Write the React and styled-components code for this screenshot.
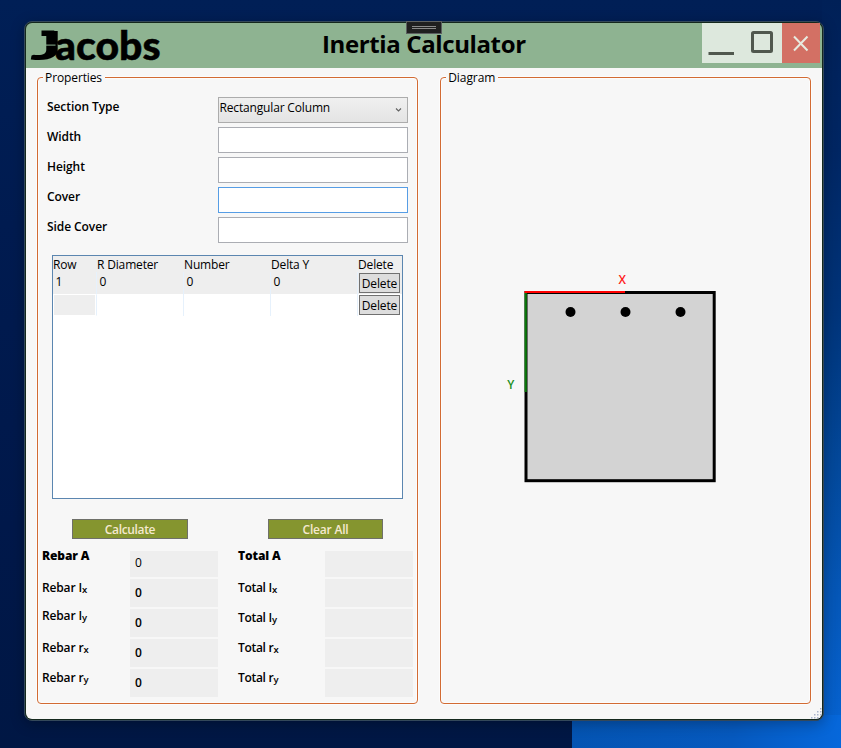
import React from 'react';
import styled, { createGlobalStyle } from 'styled-components';

const GlobalStyle = createGlobalStyle`
  * { box-sizing: border-box; }
  body { margin: 0; overflow: hidden; }
`;

const Desktop = styled.div`
  width: 841px;
  height: 748px;
  padding: 21px 0 0 24px;
  font: 400 12px/16px "Open Sans", "Noto Sans", sans-serif;
  color: #000;
  background:
    linear-gradient(100deg, #0454b2 0%, #0659be 60%, #0668dc 100%) 572px 715px / 269px 33px no-repeat,
    linear-gradient(180deg, #002057 0%, #002663 20%, #00347a 42%, #03489a 62%, #0557b8 80%, #0664d4 100%) 822px 0 / 19px 748px no-repeat,
    linear-gradient(180deg, #001f56 0%, #001b50 30%, #00184a 70%, #001744 100%);
`;

const Window = styled.main`
  position: relative;
  display: flex;
  flex-direction: column;
  width: 800px;
  height: 700px;
  border: 1px solid #34485a;
  border-radius: 8px;
  background: #14281d;
  padding: 1px;
  box-shadow: 0 3px 14px rgba(0, 0, 0, 0.28);
`;

const TitleBar = styled.header`
  display: flex;
  height: 45px;
  flex: none;
  padding-right: 2px;
  background: #8eb391;
  border-radius: 6px 6px 0 0;
`;

const Logo = styled.svg`
  display: block;
  width: 138px;
  height: 45px;
  flex: none;
  overflow: visible;
`;

const Title = styled.h1`
  flex: 1;
  margin: 0;
  padding-left: 158px;
  font-size: 24px;
  font-weight: 700;
  line-height: 42px;
  letter-spacing: -0.38px;
  white-space: nowrap;
`;

const CaptionButtons = styled.div`
  display: flex;
  height: 40px;
`;

const CaptionButton = styled.button`
  display: block;
  width: ${(p) => (p.$danger ? 38 : 40)}px;
  height: 40px;
  padding: 0;
  border: 0;
  background: ${(p) => (p.$danger ? '#d37064' : '#dde8dd')};
  svg { display: block; }
`;

const DebugHandle = styled.div`
  position: absolute;
  left: 381px;
  top: -1px;
  display: flex;
  flex-direction: column;
  gap: 1px;
  width: 36px;
  height: 13px;
  padding: 4px 5px;
  border: 1px solid #5c5f60;
  background: #1f1f1f;
`;

const HandleLine = styled.span`
  height: 1px;
  background: #8a8a8a;
`;

const Body = styled.div`
  display: flex;
  gap: 22px;
  flex: 1;
  padding: 9px 11px 15px;
  background: #f7f7f7;
  border-radius: 0 0 6px 6px;
`;

const Group = styled.section`
  display: flex;
  flex-direction: column;
  width: ${(p) => p.$width}px;
  height: 627px;
  border: 1px solid #d26b33;
  border-radius: 4px;
  box-shadow: 0 0 0 1px #fcfcfc, inset 0 0 0 1px #fcfcfc;
`;

const Legend = styled.h2`
  align-self: flex-start;
  width: ${(p) => p.$width}px;
  height: 16px;
  margin: -8px 0 0 5px;
  padding-left: 1px;
  font-size: 12px;
  font-weight: 400;
  line-height: 16px;
  letter-spacing: ${(p) => p.$track}px;
  background: #f7f7f7;
`;

const Form = styled.div`
  display: grid;
  grid-template-columns: 171px 190px;
  grid-auto-rows: 26px;
  row-gap: 4px;
  margin: 11px 0 0 9px;
`;

const FieldLabel = styled.label`
  padding-top: 2px;
  font-weight: 600;
  letter-spacing: -0.08px;
`;

const Input = styled.div`
  border: 1px solid ${(p) => (p.$focused ? '#569de5' : '#abadb3')};
  background: #fff;
`;

const Select = styled.div`
  display: flex;
  justify-content: space-between;
  padding: 2px 4px 0 0.5px;
  border: 1px solid #acacac;
  background: linear-gradient(#f0f0f0, #e4e4e4);
  letter-spacing: -0.16px;
  svg { margin-top: 5px; }
`;

const DataGrid = styled.div`
  width: 351px;
  height: 244px;
  margin: 12px 0 0 14px;
  border: 1px solid #5b86b0;
  background: #fff;
`;

const GridRow = styled.div`
  display: grid;
  grid-template-columns: 44px 87px 87px 87px 44px;
  height: ${(p) => (p.$header ? 16 : 22)}px;
  background: ${(p) => (p.$shaded ? '#eeeeee' : '#fff')};
`;

const HeadCell = styled.div`
  line-height: 17px;
  letter-spacing: -0.16px;
  white-space: nowrap;
`;

const Cell = styled.div`
  padding: 2px 0 0 2.6px;
  border-right: 1px solid #e6f1fc;
`;

const EmptyKey = styled.div`
  border: solid #fff;
  border-width: 1px 1px 1px 1px;
  border-right: 1px solid #e6f1fc;
  background: #eeeeee;
  box-shadow: inset -1px 0 0 #fff;
`;

const ActionCell = styled.div`
  padding: 1px 0 0 1px;
`;

const DeleteButton = styled.button`
  display: block;
  width: 41px;
  height: 20px;
  padding: 1px 0 0;
  border: 1px solid #707070;
  background: #dddddd;
  font: inherit;
  letter-spacing: -0.12px;
`;

const Commands = styled.div`
  display: flex;
  gap: 80px;
  margin: 20px 0 0 34px;
`;

const CommandButton = styled.button`
  width: ${(p) => p.$width}px;
  height: 20px;
  padding: 1px 0 0;
  border: 1px solid #6f7069;
  background: #85952f;
  color: #f5e9cf;
  font: inherit;
  font-weight: 600;
  line-height: 16px;
  letter-spacing: ${(p) => p.$track}px;
`;

const Results = styled.div`
  display: flex;
  gap: 20px;
  margin: 12px 0 0 4px;
`;

const ResultList = styled.div`
  display: flex;
  flex-direction: column;
  gap: 2px;
`;

const ResultRow = styled.div`
  display: grid;
  grid-template-columns: ${(p) => p.$label}px 88px;
  height: ${(p) => (p.$short ? 26 : 28)}px;
`;

const ResultLabel = styled.span`
  height: 16px;
  margin-top: ${(p) => p.$shift}px;
  font-weight: ${(p) => (p.$heavy ? 800 : 600)};
  letter-spacing: ${(p) => p.$track}px;
  white-space: nowrap;
`;

const Sub = styled.sub`
  position: relative;
  top: 1px;
  font-size: 9.5px;
  line-height: 0;
  vertical-align: baseline;
`;

const ResultValue = styled.span`
  padding: ${(p) => (p.$plain ? 4 : 6)}px 0 0 5px;
  background: #eeeeee;
  font-weight: ${(p) => (p.$plain ? 400 : 600)};
`;

const Drawing = styled.svg`
  display: block;
  width: 369px;
  height: 617px;
  font-weight: 600;
`;

const ResizeGrip = styled.svg`
  position: absolute;
  right: 1px;
  bottom: 1px;
`;

const fields = [
  { label: 'Width' },
  { label: 'Height' },
  { label: 'Cover', focused: true },
  { label: 'Side Cover' },
];

const columns = ['Row', 'R Diameter', 'Number', 'Delta Y', 'Delete'];

const quantities = [
  { symbol: 'A', rebarShift: -3, totalShift: -3 },
  { symbol: 'I', sub: 'x', rebarShift: 1, totalShift: 1 },
  { symbol: 'I', sub: 'y', rebarShift: -1, totalShift: 1 },
  { symbol: 'r', sub: 'x', rebarShift: 1, totalShift: 1 },
  { symbol: 'r', sub: 'y', rebarShift: 1, totalShift: 1 },
];

const bars = [570.5, 625.5, 680.5];

const gripDots = [
  [9, 1], [6, 4], [9, 4], [3, 7], [6, 7], [9, 7], [0, 10], [3, 10], [6, 10],
];

function JacobsLogo() {
  return (
    <Logo viewBox="26 23 138 45">
      <g fontFamily="Lato, sans-serif" fontWeight="900" fontSize="40.5">
        <text x="30" y="60" textLength="33" lengthAdjust="spacingAndGlyphs">J</text>
        <text x="55" y="60" textLength="105.5" lengthAdjust="spacingAndGlyphs" stroke="#000" strokeWidth="0.5">acobs</text>
      </g>
      <path d="M41.5 30.5H54.3V36H41.5Z" />
      <path d="M45 44.6H55.5V45.6H45Z" fill="#8eb391" />
    </Logo>
  );
}

function ResultColumn({ name, labelWidth, shiftKey, value, track }) {
  return (
    <ResultList>
      {quantities.map((q, i) => (
        <ResultRow key={i} $label={labelWidth} $short={i === 0}>
          <ResultLabel $heavy={i === 0} $shift={q[shiftKey]} $track={i === 0 ? -0.12 : track}>
            {name} {q.symbol}
            {q.sub && <Sub>{q.sub}</Sub>}
          </ResultLabel>
          <ResultValue $plain={i === 0}>{value}</ResultValue>
        </ResultRow>
      ))}
    </ResultList>
  );
}

export default function App() {
  return (
    <Desktop>
      <GlobalStyle />
      <Window>
        <TitleBar>
          <JacobsLogo />
          <Title>Inertia Calculator</Title>
          <CaptionButtons>
            <CaptionButton aria-label="Minimize">
              <svg width="40" height="40"><path d="M6.5 30.5H32" stroke="#50584e" strokeWidth="3" /></svg>
            </CaptionButton>
            <CaptionButton aria-label="Maximize">
              <svg width="40" height="40">
                <rect x="10.5" y="9.5" width="19" height="19" rx="1" fill="none" stroke="#50584e" strokeWidth="3" />
              </svg>
            </CaptionButton>
            <CaptionButton $danger aria-label="Close">
              <svg width="38" height="40">
                <path d="M12 13.5L25.5 27.5M25.5 13.5L12 27.5" stroke="#e7ebe0" strokeWidth="2" />
              </svg>
            </CaptionButton>
          </CaptionButtons>
        </TitleBar>

        <Body>
          <Group $width={381}>
            <Legend $width={62} $track={-0.12}>&#8202;Properties</Legend>
            <Form>
              <FieldLabel>Section Type</FieldLabel>
              <Select>
                Rectangular Column
                <svg width="9" height="9" viewBox="0 0 9 9">
                  <path d="M2 3.5L4.5 6L7 3.5" fill="none" stroke="#606060" strokeWidth="1.1" />
                </svg>
              </Select>
              {fields.map((f) => (
                <React.Fragment key={f.label}>
                  <FieldLabel>{f.label}</FieldLabel>
                  <Input $focused={f.focused} />
                </React.Fragment>
              ))}
            </Form>

            <DataGrid>
              <GridRow $header $shaded>
                {columns.map((c) => <HeadCell key={c}>{c}</HeadCell>)}
              </GridRow>
              <GridRow $shaded>
                <Cell>1</Cell>
                <Cell>0</Cell>
                <Cell>0</Cell>
                <Cell>0</Cell>
                <ActionCell><DeleteButton>Delete</DeleteButton></ActionCell>
              </GridRow>
              <GridRow>
                <EmptyKey />
                <Cell />
                <Cell />
                <Cell />
                <ActionCell><DeleteButton>Delete</DeleteButton></ActionCell>
              </GridRow>
            </DataGrid>

            <Commands>
              <CommandButton $width={116} $track={-0.35}>Calculate</CommandButton>
              <CommandButton $width={115} $track={-0.2}>Clear All</CommandButton>
            </Commands>

            <Results>
              <ResultColumn name="Rebar" labelWidth={88} shiftKey="rebarShift" value="0" track={-0.15} />
              <ResultColumn name="Total" labelWidth={87} shiftKey="totalShift" track={-0.3} />
            </Results>
          </Group>

          <Group $width={371}>
            <Legend $width={52} $track={-0.05}>&#8202;Diagram</Legend>
            <Drawing viewBox="441 86 369 617">
              <rect x="526" y="292.5" width="188.2" height="188.2" fill="#d3d3d3" stroke="#000" strokeWidth="3" />
              <path d="M524.5 292H625" stroke="#f00" strokeWidth="2.2" />
              <path d="M525.7 293V392" stroke="#0b7a0b" strokeWidth="2.2" />
              {bars.map((x) => <circle key={x} cx={x} cy="312" r="5" />)}
              <text x="618.5" y="284" fill="#ff1a1a">X</text>
              <text x="507.3" y="389" fill="#1d8f1d">Y</text>
            </Drawing>
          </Group>
        </Body>

        <DebugHandle><HandleLine /><HandleLine /></DebugHandle>
        <ResizeGrip width="11" height="12">
          {gripDots.map(([x, y]) => (
            <rect key={`${x}-${y}`} x={x} y={y} width="1.5" height="1.5" fill="#a9b4cc" />
          ))}
        </ResizeGrip>
      </Window>
    </Desktop>
  );
}
